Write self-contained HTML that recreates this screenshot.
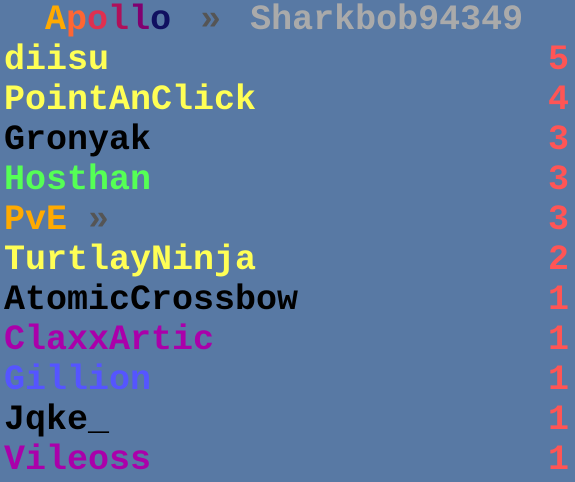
<!DOCTYPE html>
<html><head><meta charset="utf-8"><style>
html,body{margin:0;padding:0}
body{width:575px;height:482px;background:#5879a4;position:relative;overflow:hidden;font-family:"Liberation Mono",monospace;font-size:35px;font-weight:bold}
.r{position:absolute;left:4px;height:40px;line-height:40px;white-space:nowrap}
.s{position:absolute;right:6px;height:40px;line-height:40px;color:#ff5555}
.g{color:#555}
</style></head><body>
<div class="r" style="top:0;left:45px;word-spacing:8px"><span style="color:#ffaa00">A</span><span style="color:#ff6633">p</span><span style="color:#e03050">o</span><span style="color:#b0105a">l</span><span style="color:#800070">l</span><span style="color:#101060">o</span> <span class="g">»</span> <span style="color:#aaa">Sharkbob94349</span></div>
<div class="r" style="top:40px;color:#ffff55">diisu</div><div class="s" style="top:40px">5</div>
<div class="r" style="top:80px;color:#ffff55">PointAnClick</div><div class="s" style="top:80px">4</div>
<div class="r" style="top:120px;color:#000">Gronyak</div><div class="s" style="top:120px">3</div>
<div class="r" style="top:160px;color:#55ff55">Hosthan</div><div class="s" style="top:160px">3</div>
<div class="r" style="top:200px;color:#ffaa00">PvE <span class="g">»</span></div><div class="s" style="top:200px">3</div>
<div class="r" style="top:240px;color:#ffff55">TurtlayNinja</div><div class="s" style="top:240px">2</div>
<div class="r" style="top:280px;color:#000">AtomicCrossbow</div><div class="s" style="top:280px">1</div>
<div class="r" style="top:320px;color:#aa00aa">ClaxxArtic</div><div class="s" style="top:320px">1</div>
<div class="r" style="top:360px;color:#5555ff">Gillion</div><div class="s" style="top:360px">1</div>
<div class="r" style="top:400px;color:#000">Jqke_</div><div class="s" style="top:400px">1</div>
<div class="r" style="top:440px;color:#aa00aa">Vileoss</div><div class="s" style="top:440px">1</div>
</body></html>
